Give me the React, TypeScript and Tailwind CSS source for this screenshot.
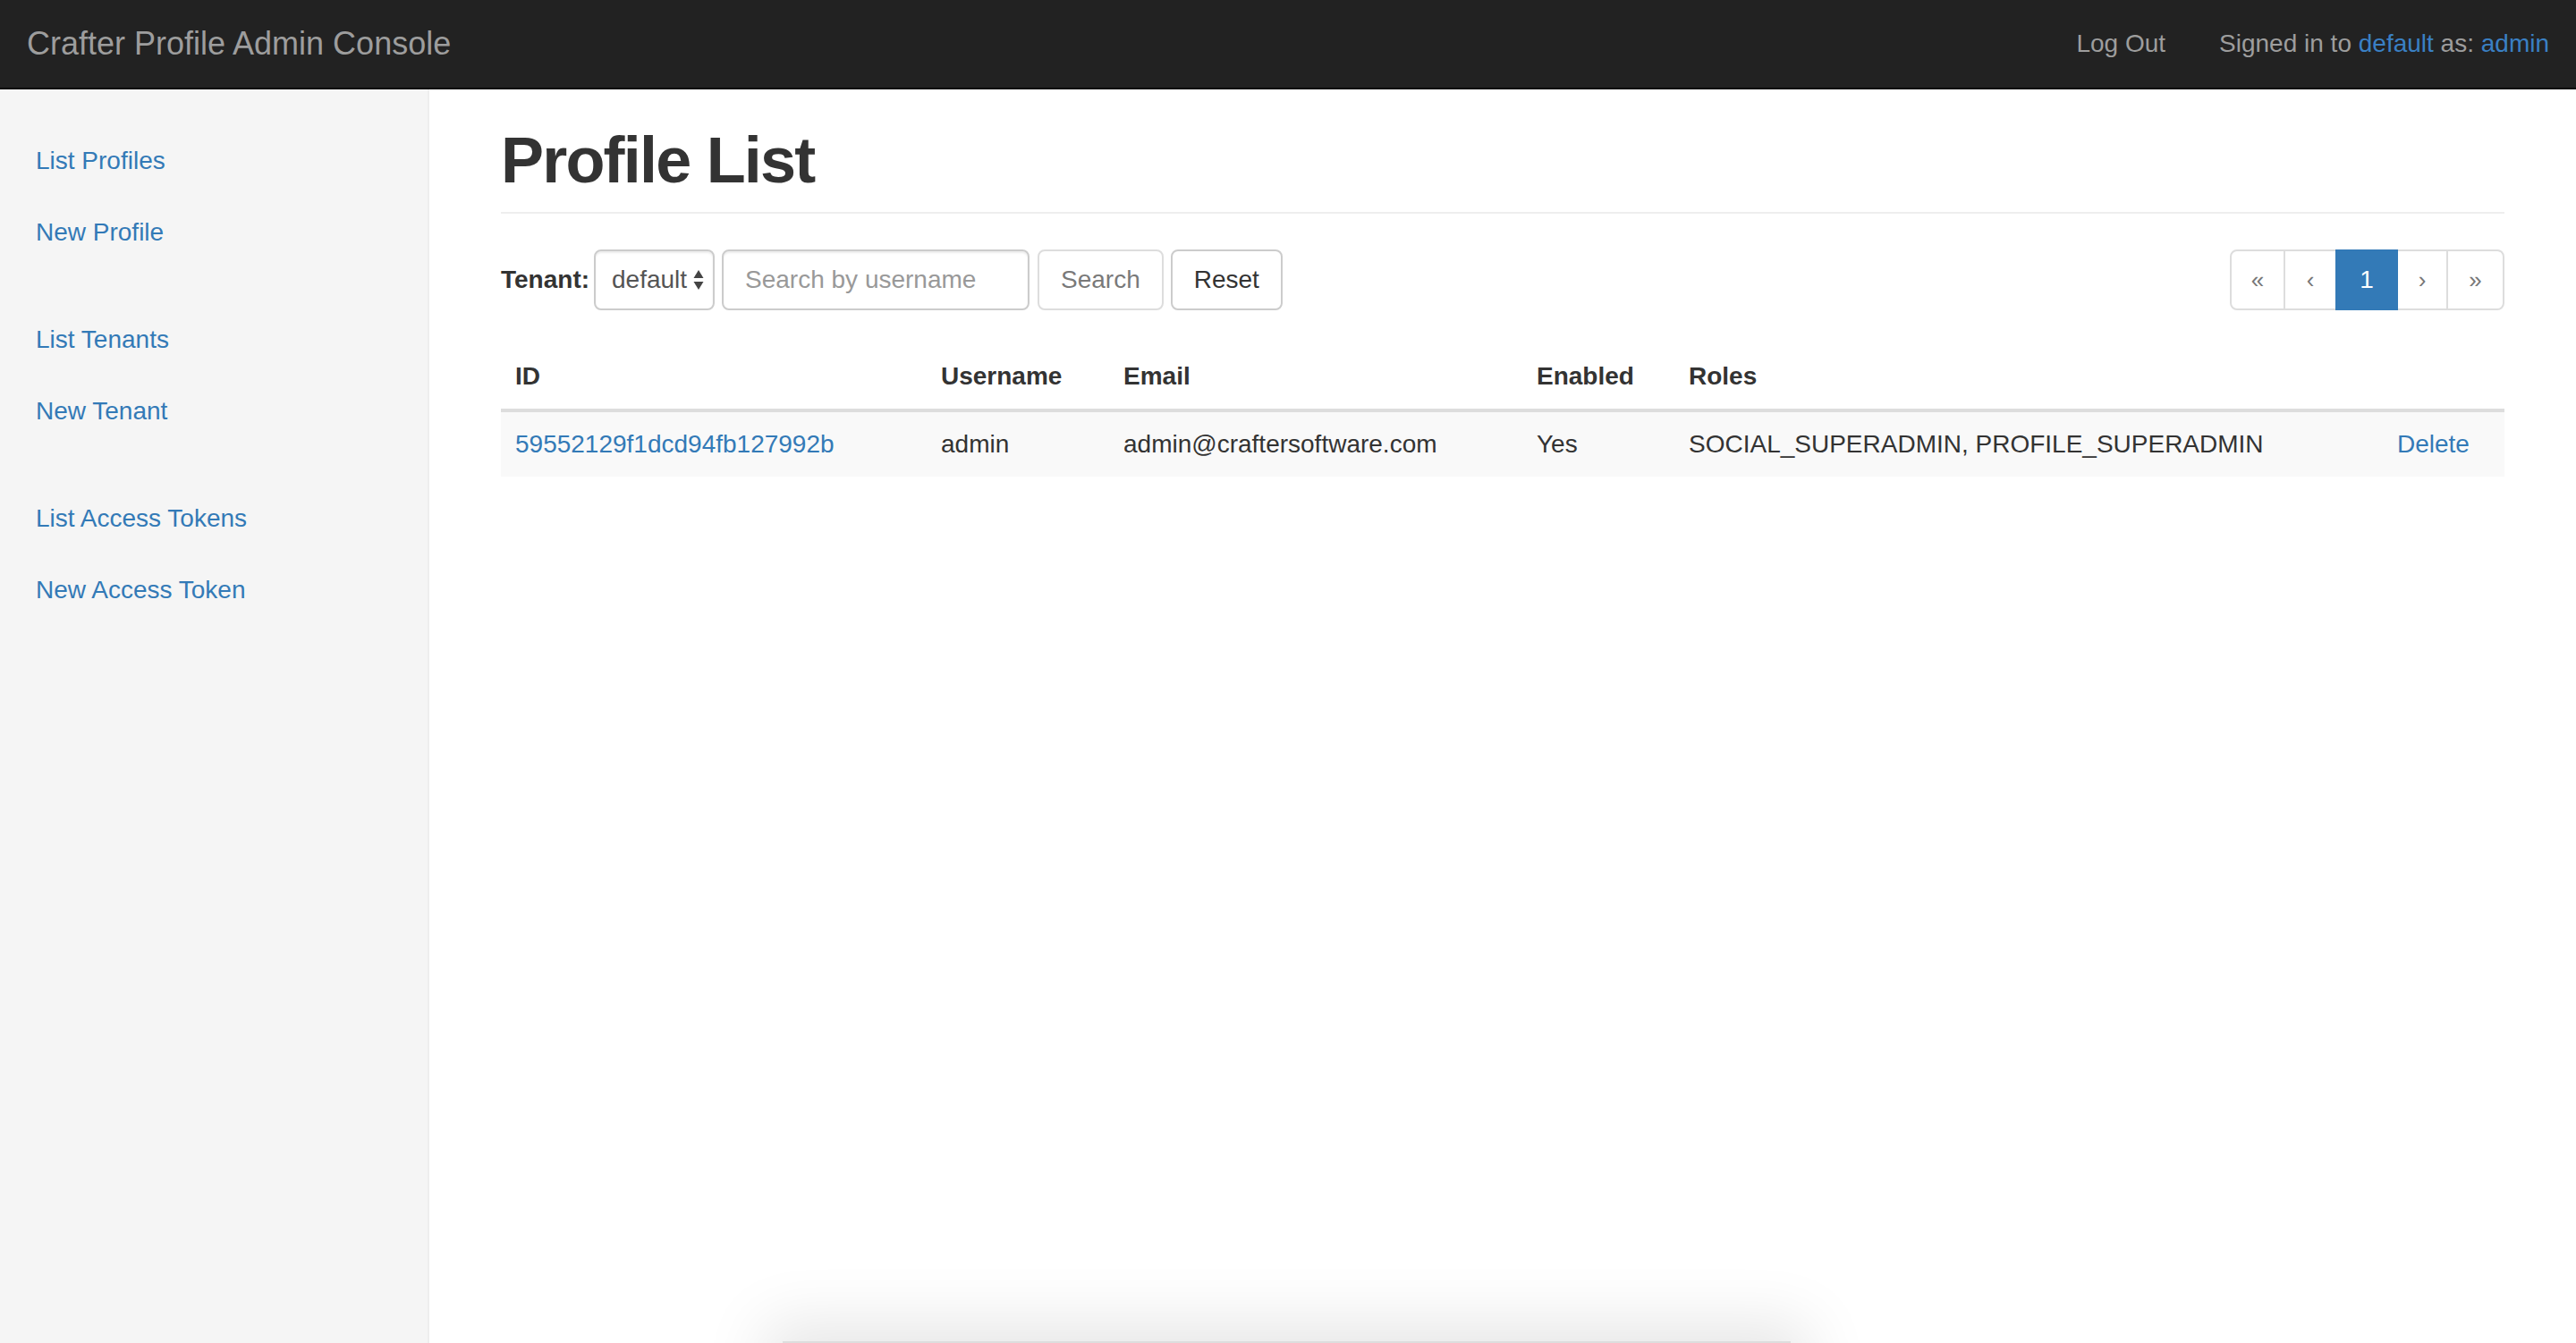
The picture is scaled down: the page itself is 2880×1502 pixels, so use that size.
import React from 'react'

const groups = [
  ['List Profiles', 'New Profile'],
  ['List Tenants', 'New Tenant'],
  ['List Access Tokens', 'New Access Token'],
]

const cols = [
  { label: 'ID', w: 'w-[476px]' },
  { label: 'Username', w: 'w-[204px]' },
  { label: 'Email', w: 'w-[462px]' },
  { label: 'Enabled', w: 'w-[170px]' },
  { label: 'Roles', w: 'w-[792px]' },
  { label: '', w: 'w-[136px]' },
]

function SelectArrows() {
  return (
    <svg width="12" height="24" viewBox="0 0 12 24" className="shrink-0">
      <path d="M6 1 L11.5 10 L0.5 10 Z" fill="#444" />
      <path d="M6 23 L11.5 14 L0.5 14 Z" fill="#444" />
    </svg>
  )
}

function Pagination() {
  const items = [
    { t: '«', w: 'w-[62px] rounded-l-[8px]', active: false },
    { t: '‹', w: 'w-[60px]', active: false },
    { t: '1', w: 'w-[70px]', active: true },
    { t: '›', w: 'w-[58px]', active: false },
    { t: '»', w: 'w-[65px] rounded-r-[8px]', active: false },
  ]
  return (
    <div className="flex">
      {items.map((it, i) => (
        <span
          key={i}
          className={`${it.w} ${i > 0 ? '-ml-[2px]' : ''} h-[68px] flex items-center justify-center border-2 ${
            it.active
              ? 'bg-[#337ab7] border-[#337ab7] text-white relative z-10'
              : 'bg-white border-[#ddd] text-[#777] text-[26px]'
          }`}
        >
          {it.t}
        </span>
      ))}
    </div>
  )
}

export default function App() {
  return (
    <div className="relative h-[1502px] overflow-hidden bg-white font-['Liberation_Sans',Arial,sans-serif] text-[28px] leading-[40px] text-[#333]">
      <header className="h-[100px] bg-[#222] border-b-2 border-[#080808] flex items-center justify-between pl-[30px] pr-[30px]">
        <span className="text-[36px] leading-[40px] text-[#9d9d9d]">Crafter Profile Admin Console</span>
        <div className="flex items-center text-[#9d9d9d]">
          <a className="px-[30px]">Log Out</a>
          <span className="ml-[30px]">
            Signed in to <a className="text-[#3a80c4]">default</a> as: <a className="text-[#3a80c4]">admin</a>
          </span>
        </div>
      </header>

      <div className="flex h-[1402px]">
        <aside className="w-[480px] shrink-0 bg-[#f5f5f5] border-r-2 border-[#eee] pt-[40px]">
          {groups.map((g, gi) => (
            <ul key={gi} className="mb-[40px]">
              {g.map((l) => (
                <li key={l}>
                  <a className="block px-[40px] py-[20px] text-[#337ab7]">{l}</a>
                </li>
              ))}
            </ul>
          ))}
        </aside>

        <main className="flex-1 px-[80px] pt-[40px]">
          <h1 className="text-[72px] leading-[79px] font-bold tracking-[-1.8px] text-[#333] pb-[18px] border-b-2 border-[#eee] mb-[40px]">
            Profile List
          </h1>

          <div className="flex items-center justify-between h-[68px]">
            <div className="flex items-center">
              <label className="font-bold mr-[5px]">Tenant:</label>
              <div className="h-[68px] w-[135px] flex items-center justify-between pl-[18px] pr-[10px] border-2 border-[#ccc] rounded-[8px] bg-white shadow-[inset_0_2px_2px_rgba(0,0,0,0.075)] text-[#555]">
                <span>default</span>
                <SelectArrows />
              </div>
              <input
                placeholder="Search by username"
                className="ml-[8px] h-[68px] w-[344px] px-[24px] border-2 border-[#ccc] rounded-[8px] bg-white shadow-[inset_0_2px_2px_rgba(0,0,0,0.075)] text-[#555] placeholder:text-[#999] outline-none"
              />
              <button className="ml-[9px] h-[68px] px-[24px] border-2 border-[#ccc] rounded-[8px] bg-white text-[#333] opacity-65">
                Search
              </button>
              <button className="ml-[8px] h-[68px] px-[24px] border-2 border-[#ccc] rounded-[8px] bg-white text-[#333]">
                Reset
              </button>
            </div>
            <Pagination />
          </div>

          <table className="mt-[38px] w-full table-fixed border-collapse">
            <thead>
              <tr>
                {cols.map((c, i) => (
                  <th key={i} className={`${c.w} text-left font-bold px-[16px] py-[16px] border-b-4 border-[#ddd]`}>
                    {c.label}
                  </th>
                ))}
              </tr>
            </thead>
            <tbody>
              <tr className="bg-[#f9f9f9]">
                <td className="px-[16px] py-[16px] border-t-2 border-[#ddd]">
                  <a className="text-[#337ab7]">59552129f1dcd94fb127992b</a>
                </td>
                <td className="px-[16px] py-[16px] border-t-2 border-[#ddd]">admin</td>
                <td className="px-[16px] py-[16px] border-t-2 border-[#ddd]">admin@craftersoftware.com</td>
                <td className="px-[16px] py-[16px] border-t-2 border-[#ddd]">Yes</td>
                <td className="px-[16px] py-[16px] border-t-2 border-[#ddd] whitespace-nowrap">
                  SOCIAL_SUPERADMIN, PROFILE_SUPERADMIN
                </td>
                <td className="px-[16px] py-[16px] border-t-2 border-[#ddd]">
                  <a className="text-[#337ab7]">Delete</a>
                </td>
              </tr>
            </tbody>
          </table>
        </main>
      </div>

      {/* shadow of something sitting just below the viewport */}
      <div className="absolute left-[875px] top-[1500px] w-[1127px] h-[100px] bg-[#ddd] shadow-[0_0_70px_20px_rgba(0,0,0,0.1)]" />
    </div>
  )
}
